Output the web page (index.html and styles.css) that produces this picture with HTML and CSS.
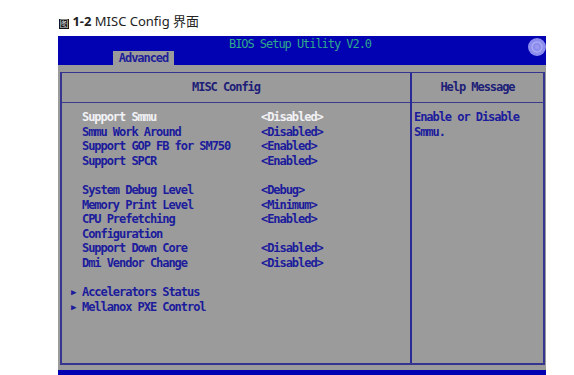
FILE: index.html
```html
<!DOCTYPE html>
<html lang="zh">
<head>
  <meta charset="UTF-8" />
  <title>MISC Config</title>
  <link rel="stylesheet" href="styles.css">
</head>
<body>
  <div class="caption"><span class="fig">图</span> <b>1-2</b> MISC Config 界面</div>

  <div class="bios">
    <div class="bios-top">
      <div class="title">BIOS Setup Utility V2.0</div>
      <div class="tab">Advanced</div>
      <svg class="logo" width="18" height="18" viewBox="0 0 18 18">
        <circle cx="9" cy="9" r="9" fill="#8c8cee"/>
        <circle cx="9" cy="9" r="5" fill="none" stroke="#a9a9f4" stroke-width="1.5"/>
        <circle cx="9" cy="9" r="2" fill="#9a9af0"/>
      </svg>
    </div>

    <div class="bios-body">
      <div class="panel">
        <div class="main">
          <div class="head head-main">MISC Config</div>
          <div class="items">
            <div class="row selected"><span class="label">Support Smmu</span><span class="value">&lt;Disabled&gt;</span></div>
            <div class="row"><span class="label">Smmu Work Around</span><span class="value">&lt;Disabled&gt;</span></div>
            <div class="row"><span class="label">Support GOP FB for SM750</span><span class="value">&lt;Enabled&gt;</span></div>
            <div class="row"><span class="label">Support SPCR</span><span class="value">&lt;Enabled&gt;</span></div>
            <div class="row blank"></div>
            <div class="row"><span class="label">System Debug Level</span><span class="value">&lt;Debug&gt;</span></div>
            <div class="row"><span class="label">Memory Print Level</span><span class="value">&lt;Minimum&gt;</span></div>
            <div class="row"><span class="label">CPU Prefetching</span><span class="value">&lt;Enabled&gt;</span></div>
            <div class="row"><span class="label">Configuration</span></div>
            <div class="row"><span class="label">Support Down Core</span><span class="value">&lt;Disabled&gt;</span></div>
            <div class="row"><span class="label">Dmi Vendor Change</span><span class="value">&lt;Disabled&gt;</span></div>
            <div class="row blank"></div>
            <div class="row sub"><span class="arrow">&#9654;</span><span class="label">Accelerators Status</span></div>
            <div class="row sub"><span class="arrow">&#9654;</span><span class="label">Mellanox PXE Control</span></div>
          </div>
        </div>
        <div class="help">
          <div class="head">Help Message</div>
          <div class="help-text">Enable or Disable<br>Smmu.</div>
        </div>
      </div>
    </div>

    <div class="bios-foot"></div>
  </div>
</body>
</html>
```

FILE: styles.css
```css
body {
  margin: 0;
  background: #ffffff;
  font-family: "Noto Sans", "Noto Sans CJK SC", sans-serif;
}

.caption {
  padding: 12px 0 0 59px;
  height: 36px;
  box-sizing: border-box;
  font-size: 13px;
  line-height: 18px;
  color: #222;
}

.caption b {
  font-weight: bold;
}

.fig {
  display: inline-block;
  vertical-align: -1px;
  width: 10px;
  height: 10px;
  background: #111;
  color: #ddd;
  font-family: "Noto Sans CJK SC", sans-serif;
  font-size: 9px;
  line-height: 10px;
  text-align: center;
}

.bios {
  margin-left: 58px;
  width: 488px;
  font-family: "DejaVu Sans Mono", monospace;
  font-size: 12px;
  letter-spacing: -1.05px;
}

.bios-top {
  position: relative;
  height: 29px;
  background: #0202b2;
}

.title {
  padding-top: 2px;
  text-align: center;
  color: #2fa88c;
  line-height: 13px;
  padding-right: 4px;
}

.tab {
  position: absolute;
  left: 55px;
  bottom: 0;
  width: 61px;
  height: 14px;
  background: #9b9b9b;
  color: #1e1e9a;
  font-weight: bold;
  text-align: center;
  line-height: 14px;
}

.logo {
  position: absolute;
  right: 0;
  top: 2px;
}

.bios-body {
  background: #9b9b9b;
  padding: 7px 1px 5px 2px;
}

.panel {
  display: grid;
  grid-template-columns: 350px 1fr;
  height: 293px;
  box-sizing: border-box;
  border: 2px solid #35358f;
  border-top-width: 1px;
  color: #1c1c9c;
  font-weight: bold;
}

.main {
  border-right: 2px solid #2a2a96;
}

.head {
  height: 30px;
  box-sizing: border-box;
  border-bottom: 1px solid #3a3a8e;
  line-height: 29px;
  text-align: center;
  color: #1e1e78;
}

.head-main {
  padding-right: 20px;
}

.items {
  padding: 7px 0 0 20px;
}

.row {
  display: flex;
  height: 14.6px;
  line-height: 14.6px;
}

.label {
  width: 179px;
}

.selected {
  color: #f2f2f6;
}

.sub .label {
  width: auto;
}

.arrow {
  width: 11px;
  margin-left: -11px;
  font-size: 9px;
  letter-spacing: 0;
}

.help-text {
  padding: 7px 0 0 2px;
  line-height: 14.6px;
}

.bios-foot {
  height: 6px;
  background: #0202b2;
}
```
